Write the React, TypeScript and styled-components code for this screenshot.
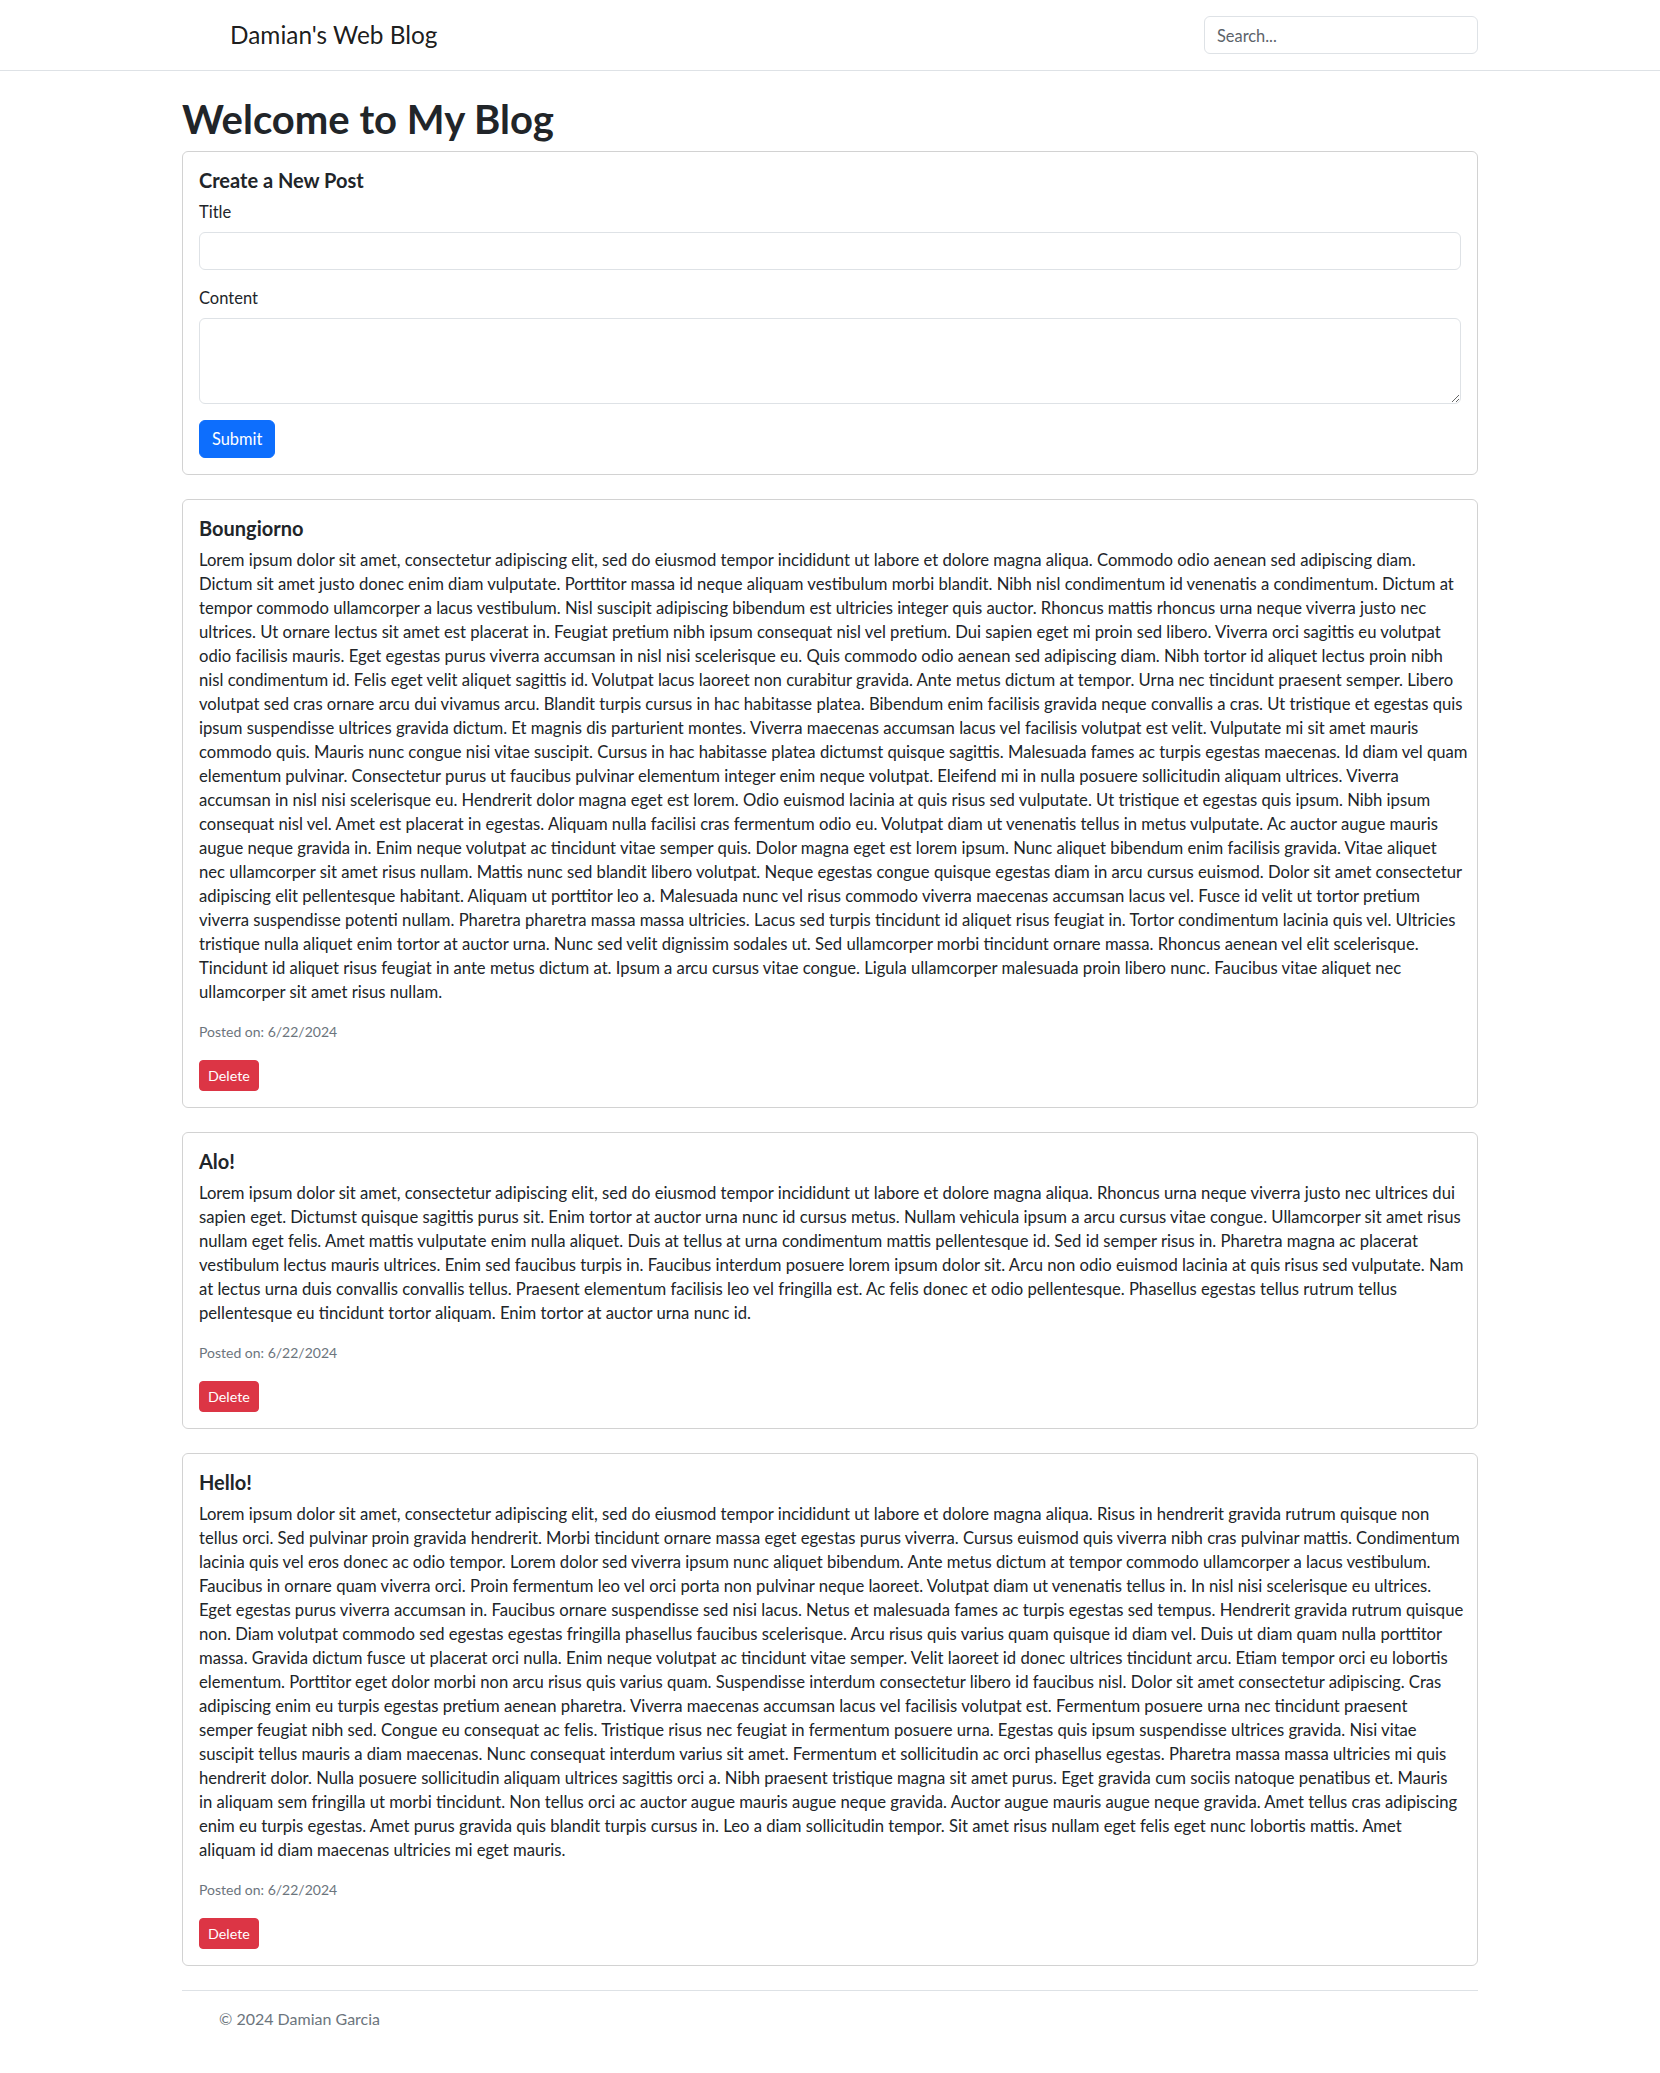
import React from "react";
import styled, { createGlobalStyle, css } from "styled-components";

const GlobalStyle = createGlobalStyle`
  *, *::before, *::after { box-sizing: border-box; }
  body {
    margin: 0;
    font-family: Lato, "Liberation Sans", sans-serif;
    font-size: 16px;
    line-height: 1.5;
    color: #212529;
    background: #ffffff;
  }
`;

const Navbar = styled.nav`
  border-bottom: 1px solid #dee2e6;
  padding: 16px 0;
`;

const NavInner = styled.div`
  width: 1296px;
  margin: 0 auto;
  display: flex;
  align-items: center;
  justify-content: space-between;
`;

const Brand = styled.a`
  margin-left: 48px;
  font-size: 24.4px;
  line-height: 36px;
  color: rgba(0, 0, 0, 0.9);
  text-decoration: none;
`;

const SearchInput = styled.input`
  width: 274px;
  height: 38px;
  padding: 6px 12px;
  font: inherit;
  font-size: 16.4px;
  line-height: 24px;
  color: #212529;
  border: 1px solid #dee2e6;
  border-radius: 6px;
  &::placeholder { color: #5c636a; }
`;

const Main = styled.main`
  width: 1296px;
  margin: 24px auto 0;
`;

const PageTitle = styled.h1`
  margin: 0 0 8px;
  font-size: 40px;
  font-weight: 700;
  line-height: 48px;
`;

const Card = styled.section`
  border: 1px solid rgba(0, 0, 0, 0.175);
  border-radius: 6px;
  padding: 16px;
  margin-bottom: 24px;
`;

const PostCard = styled(Card)`
  display: flex;
  flex-direction: column;
  align-items: flex-start;
`;

const CardTitle = styled.h5`
  margin: 0 0 8px;
  font-size: 20px;
  font-weight: 700;
  line-height: 24px;
`;

const Field = styled.div`
  margin-bottom: 16px;
`;

const Label = styled.label`
  display: block;
  margin-bottom: 8px;
  font-size: 16.5px;
  line-height: 24px;
`;

const fieldBase = css`
  display: block;
  width: 100%;
  padding: 6px 12px;
  font: inherit;
  line-height: 24px;
  color: #212529;
  border: 1px solid #dee2e6;
  border-radius: 6px;
  background: #fff;
`;

const TextInput = styled.input`
  ${fieldBase};
  height: 38px;
`;

const TextArea = styled.textarea`
  ${fieldBase};
  height: 86px;
  resize: vertical;
`;

const Button = styled.button<{ $variant: "primary" | "danger"; $small?: boolean }>`
  display: inline-block;
  vertical-align: middle;
  border: 1px solid transparent;
  color: #fff;
  font-family: inherit;
  cursor: pointer;
  background: ${(p) => (p.$variant === "primary" ? "#0d6efd" : "#dc3545")};
  border-color: ${(p) => (p.$variant === "primary" ? "#0d6efd" : "#dc3545")};
  ${(p) =>
    p.$small
      ? css`
          padding: 4px 8px;
          font-size: 14.3px;
          line-height: 21px;
          border-radius: 4px;
        `
      : css`
          padding: 6px 12px;
          font-size: 16.4px;
          line-height: 24px;
          border-radius: 6px;
        `}
`;

const PostBody = styled.p`
  margin: 0 0 16px;
  font-size: 16.65px;
  line-height: 24px;
  white-space: pre;
`;

const Meta = styled.p`
  margin: 0 0 16px;
  font-size: 14px;
  line-height: 24px;
  color: #6c757d;
`;

const Footer = styled.footer`
  width: 1296px;
  margin: 2px auto 24px;
  border-top: 1px solid #dee2e6;
  padding: 16px 0 16px 37px;
  line-height: 24px;
  color: #6c757d;
`;

type Post = { title: string; date: string; lines: string[] };

const posts: Post[] = [
  {
    title: "Boungiorno",
    date: "6/22/2024",
    lines: [
      "Lorem ipsum dolor sit amet, consectetur adipiscing elit, sed do eiusmod tempor incididunt ut labore et dolore magna aliqua. Commodo odio aenean sed adipiscing diam.",
      "Dictum sit amet justo donec enim diam vulputate. Porttitor massa id neque aliquam vestibulum morbi blandit. Nibh nisl condimentum id venenatis a condimentum. Dictum at",
      "tempor commodo ullamcorper a lacus vestibulum. Nisl suscipit adipiscing bibendum est ultricies integer quis auctor. Rhoncus mattis rhoncus urna neque viverra justo nec",
      "ultrices. Ut ornare lectus sit amet est placerat in. Feugiat pretium nibh ipsum consequat nisl vel pretium. Dui sapien eget mi proin sed libero. Viverra orci sagittis eu volutpat",
      "odio facilisis mauris. Eget egestas purus viverra accumsan in nisl nisi scelerisque eu. Quis commodo odio aenean sed adipiscing diam. Nibh tortor id aliquet lectus proin nibh",
      "nisl condimentum id. Felis eget velit aliquet sagittis id. Volutpat lacus laoreet non curabitur gravida. Ante metus dictum at tempor. Urna nec tincidunt praesent semper. Libero",
      "volutpat sed cras ornare arcu dui vivamus arcu. Blandit turpis cursus in hac habitasse platea. Bibendum enim facilisis gravida neque convallis a cras. Ut tristique et egestas quis",
      "ipsum suspendisse ultrices gravida dictum. Et magnis dis parturient montes. Viverra maecenas accumsan lacus vel facilisis volutpat est velit. Vulputate mi sit amet mauris",
      "commodo quis. Mauris nunc congue nisi vitae suscipit. Cursus in hac habitasse platea dictumst quisque sagittis. Malesuada fames ac turpis egestas maecenas. Id diam vel quam",
      "elementum pulvinar. Consectetur purus ut faucibus pulvinar elementum integer enim neque volutpat. Eleifend mi in nulla posuere sollicitudin aliquam ultrices. Viverra",
      "accumsan in nisl nisi scelerisque eu. Hendrerit dolor magna eget est lorem. Odio euismod lacinia at quis risus sed vulputate. Ut tristique et egestas quis ipsum. Nibh ipsum",
      "consequat nisl vel. Amet est placerat in egestas. Aliquam nulla facilisi cras fermentum odio eu. Volutpat diam ut venenatis tellus in metus vulputate. Ac auctor augue mauris",
      "augue neque gravida in. Enim neque volutpat ac tincidunt vitae semper quis. Dolor magna eget est lorem ipsum. Nunc aliquet bibendum enim facilisis gravida. Vitae aliquet",
      "nec ullamcorper sit amet risus nullam. Mattis nunc sed blandit libero volutpat. Neque egestas congue quisque egestas diam in arcu cursus euismod. Dolor sit amet consectetur",
      "adipiscing elit pellentesque habitant. Aliquam ut porttitor leo a. Malesuada nunc vel risus commodo viverra maecenas accumsan lacus vel. Fusce id velit ut tortor pretium",
      "viverra suspendisse potenti nullam. Pharetra pharetra massa massa ultricies. Lacus sed turpis tincidunt id aliquet risus feugiat in. Tortor condimentum lacinia quis vel. Ultricies",
      "tristique nulla aliquet enim tortor at auctor urna. Nunc sed velit dignissim sodales ut. Sed ullamcorper morbi tincidunt ornare massa. Rhoncus aenean vel elit scelerisque.",
      "Tincidunt id aliquet risus feugiat in ante metus dictum at. Ipsum a arcu cursus vitae congue. Ligula ullamcorper malesuada proin libero nunc. Faucibus vitae aliquet nec",
      "ullamcorper sit amet risus nullam.",
    ],
  },
  {
    title: "Alo!",
    date: "6/22/2024",
    lines: [
      "Lorem ipsum dolor sit amet, consectetur adipiscing elit, sed do eiusmod tempor incididunt ut labore et dolore magna aliqua. Rhoncus urna neque viverra justo nec ultrices dui",
      "sapien eget. Dictumst quisque sagittis purus sit. Enim tortor at auctor urna nunc id cursus metus. Nullam vehicula ipsum a arcu cursus vitae congue. Ullamcorper sit amet risus",
      "nullam eget felis. Amet mattis vulputate enim nulla aliquet. Duis at tellus at urna condimentum mattis pellentesque id. Sed id semper risus in. Pharetra magna ac placerat",
      "vestibulum lectus mauris ultrices. Enim sed faucibus turpis in. Faucibus interdum posuere lorem ipsum dolor sit. Arcu non odio euismod lacinia at quis risus sed vulputate. Nam",
      "at lectus urna duis convallis convallis tellus. Praesent elementum facilisis leo vel fringilla est. Ac felis donec et odio pellentesque. Phasellus egestas tellus rutrum tellus",
      "pellentesque eu tincidunt tortor aliquam. Enim tortor at auctor urna nunc id.",
    ],
  },
  {
    title: "Hello!",
    date: "6/22/2024",
    lines: [
      "Lorem ipsum dolor sit amet, consectetur adipiscing elit, sed do eiusmod tempor incididunt ut labore et dolore magna aliqua. Risus in hendrerit gravida rutrum quisque non",
      "tellus orci. Sed pulvinar proin gravida hendrerit. Morbi tincidunt ornare massa eget egestas purus viverra. Cursus euismod quis viverra nibh cras pulvinar mattis. Condimentum",
      "lacinia quis vel eros donec ac odio tempor. Lorem dolor sed viverra ipsum nunc aliquet bibendum. Ante metus dictum at tempor commodo ullamcorper a lacus vestibulum.",
      "Faucibus in ornare quam viverra orci. Proin fermentum leo vel orci porta non pulvinar neque laoreet. Volutpat diam ut venenatis tellus in. In nisl nisi scelerisque eu ultrices.",
      "Eget egestas purus viverra accumsan in. Faucibus ornare suspendisse sed nisi lacus. Netus et malesuada fames ac turpis egestas sed tempus. Hendrerit gravida rutrum quisque",
      "non. Diam volutpat commodo sed egestas egestas fringilla phasellus faucibus scelerisque. Arcu risus quis varius quam quisque id diam vel. Duis ut diam quam nulla porttitor",
      "massa. Gravida dictum fusce ut placerat orci nulla. Enim neque volutpat ac tincidunt vitae semper. Velit laoreet id donec ultrices tincidunt arcu. Etiam tempor orci eu lobortis",
      "elementum. Porttitor eget dolor morbi non arcu risus quis varius quam. Suspendisse interdum consectetur libero id faucibus nisl. Dolor sit amet consectetur adipiscing. Cras",
      "adipiscing enim eu turpis egestas pretium aenean pharetra. Viverra maecenas accumsan lacus vel facilisis volutpat est. Fermentum posuere urna nec tincidunt praesent",
      "semper feugiat nibh sed. Congue eu consequat ac felis. Tristique risus nec feugiat in fermentum posuere urna. Egestas quis ipsum suspendisse ultrices gravida. Nisi vitae",
      "suscipit tellus mauris a diam maecenas. Nunc consequat interdum varius sit amet. Fermentum et sollicitudin ac orci phasellus egestas. Pharetra massa massa ultricies mi quis",
      "hendrerit dolor. Nulla posuere sollicitudin aliquam ultrices sagittis orci a. Nibh praesent tristique magna sit amet purus. Eget gravida cum sociis natoque penatibus et. Mauris",
      "in aliquam sem fringilla ut morbi tincidunt. Non tellus orci ac auctor augue mauris augue neque gravida. Auctor augue mauris augue neque gravida. Amet tellus cras adipiscing",
      "enim eu turpis egestas. Amet purus gravida quis blandit turpis cursus in. Leo a diam sollicitudin tempor. Sit amet risus nullam eget felis eget nunc lobortis mattis. Amet",
      "aliquam id diam maecenas ultricies mi eget mauris.",
    ],
  },
];

export default function App() {
  return (
    <>
      <GlobalStyle />
      <Navbar>
        <NavInner>
          <Brand href="#">Damian's Web Blog</Brand>
          <form role="search" onSubmit={(e) => e.preventDefault()}>
            <SearchInput type="search" placeholder="Search..." aria-label="Search" />
          </form>
        </NavInner>
      </Navbar>
      <Main>
        <PageTitle>Welcome to My Blog</PageTitle>
        <Card>
          <CardTitle>Create a New Post</CardTitle>
          <form onSubmit={(e) => e.preventDefault()}>
            <Field>
              <Label htmlFor="title">Title</Label>
              <TextInput id="title" type="text" />
            </Field>
            <Field>
              <Label htmlFor="content">Content</Label>
              <TextArea id="content" rows={3} />
            </Field>
            <Button type="submit" $variant="primary">Submit</Button>
          </form>
        </Card>
        {posts.map((post) => (
          <PostCard key={post.title}>
            <CardTitle>{post.title}</CardTitle>
            <PostBody>{post.lines.join("\n")}</PostBody>
            <Meta>Posted on: {post.date}</Meta>
            <Button type="button" $variant="danger" $small>Delete</Button>
          </PostCard>
        ))}
      </Main>
      <Footer>© 2024 Damian Garcia</Footer>
    </>
  );
}
